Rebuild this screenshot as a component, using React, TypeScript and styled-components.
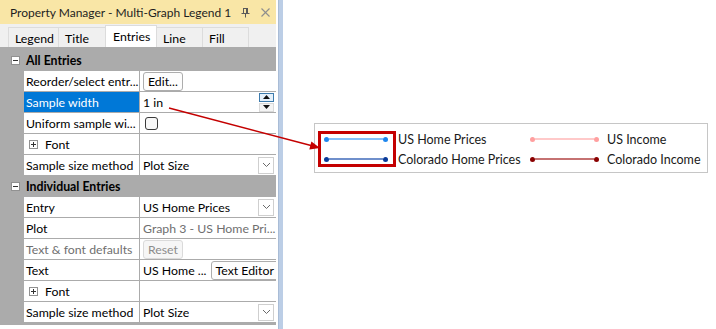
import React from "react";
import styled, { createGlobalStyle } from "styled-components";

const GlobalStyle = createGlobalStyle`
  html, body { margin: 0; padding: 0; background: #ffffff; }
  body { font-family: "Lato", "Noto Sans", "DejaVu Sans", sans-serif; font-size: 12.3px; color: #000; }
  * { box-sizing: border-box; }
`;

const Page = styled.div`
  position: relative;
  width: 716px;
  height: 329px;
  display: flex;
  align-items: flex-start;
  overflow: hidden;
`;

const Panel = styled.div`
  width: 276px;
  display: flex;
  flex-direction: column;
`;

const TitleBar = styled.div`
  height: 24px;
  background: #f9e6a6;
  display: flex;
  align-items: center;
  padding: 0 6px 0 10px;
  white-space: nowrap;
  font-size: 12px;
`;

const TitleText = styled.span`
  flex: 1;
  min-width: 0;
  color: #1e1e1e;
`;

const TitleIcon = styled.svg<{ $ml?: number }>`
  display: block;
  flex: none;
  margin-left: ${(p) => p.$ml ?? 0}px;
`;

const TabStrip = styled.div`
  height: 23px;
  background: #f0f0f0;
  display: flex;
  align-items: flex-end;
  padding-left: 8px;
`;

const Tab = styled.div<{ $w: number; $active?: boolean }>`
  width: ${(p) => p.$w}px;
  height: ${(p) => (p.$active ? 22 : 20)}px;
  margin-right: -1px;
  border: 1px solid #dcdcdc;
  border-bottom: none;
  background: ${(p) => (p.$active ? "#ffffff" : "#f0f0f0")};
  padding-left: ${(p) => (p.$active ? 7 : 6)}px;
  padding-top: ${(p) => (p.$active ? 0 : 2)}px;
  display: flex;
  align-items: center;
  position: ${(p) => (p.$active ? "relative" : "static")};
  z-index: ${(p) => (p.$active ? 1 : 0)};
`;

const Grid = styled.div`
  background: #ababab;
  padding: 3px 0 3px;
  display: flex;
  flex-direction: column;
  gap: 1px;
`;

const SectionHeader = styled.div`
  height: 20px;
  display: flex;
  align-items: center;
  padding-left: 11px;
  gap: 6px;
  font-weight: bold;
`;

const Row = styled.div`
  display: grid;
  grid-template-columns: 115px 1fr;
  column-gap: 1px;
  margin-left: 24px;
  height: 20px;
`;

const Cell = styled.div<{ $selected?: boolean; $muted?: boolean; $value?: boolean }>`
  background: ${(p) => (p.$selected ? "#0078d7" : "#ffffff")};
  color: ${(p) => (p.$selected ? "#ffffff" : p.$muted ? "#6f6f6f" : "#000000")};
  display: flex;
  align-items: center;
  padding-left: ${(p) => (p.$value ? 3 : 2)}px;
  padding-right: 2px;
  white-space: nowrap;
  overflow: hidden;
  gap: 4px;
`;

const Button = styled.div<{ $disabled?: boolean }>`
  height: 19px;
  margin-top: 1px;
  padding: 0 4px;
  border: 1px solid ${(p) => (p.$disabled ? "#dadada" : "#adadad")};
  border-radius: 3px;
  background: ${(p) => (p.$disabled ? "#f6f6f6" : "#fdfdfd")};
  color: ${(p) => (p.$disabled ? "#8c8c8c" : "#000")};
  display: flex;
  align-items: center;
`;

const PushRight = styled.div`
  margin-left: auto;
  display: flex;
`;

const Checkbox = styled.div`
  width: 13px;
  height: 13px;
  margin-left: 2px;
  border: 1px solid #3a3a3a;
  border-radius: 3px;
  background: #f8f8f8;
`;

const Spinner = styled.div`
  display: flex;
  flex-direction: column;
  gap: 1px;
  width: 15px;
`;

const SpinButton = styled.div<{ $focus?: boolean }>`
  height: 9px;
  border: 1px solid ${(p) => (p.$focus ? "#3d7bad" : "#d9d9d9")};
  background: ${(p) => (p.$focus ? "#e5f1fb" : "#f4f4f4")};
  display: flex;
  align-items: center;
  justify-content: center;
`;

const DropButton = styled.div`
  width: 16px;
  height: 17px;
  border: 1px solid #cfcfcf;
  background: #ffffff;
  display: flex;
  align-items: center;
  justify-content: center;
`;

const ExpandBox = styled.div`
  width: 9px;
  height: 9px;
  border: 1px solid #919191;
  background: #ffffff;
  position: relative;
  flex: none;
`;

const Divider = styled.div`
  width: 5px;
  height: 329px;
  margin-left: 2px;
  background: #bccee6;
  border-left: 1px solid #a9bcd6;
`;

const Canvas = styled.div`
  flex: 1;
  padding: 123px 0 0 31px;
`;

const Legend = styled.div`
  width: 394px;
  height: 50px;
  border: 1px solid #c6c6c6;
  padding: 7px 0 5px 3px;
  display: flex;
  align-items: center;
  color: #1a1a1a;
  font-size: 12.5px;
`;

const RedBox = styled.div`
  width: 79px;
  height: 36px;
  border: 3px solid #c40000;
  display: flex;
  flex-direction: column;
  gap: 10px;
  padding: 0 5px 0 3px;
`;

const Sample = styled.div<{ $h: number }>`
  height: ${(p) => p.$h}px;
  display: flex;
  align-items: center;
`;

const Dot = styled.span<{ $c: string }>`
  width: 5px;
  height: 5px;
  border-radius: 50%;
  background: ${(p) => p.$c};
  flex: none;
`;

const Line = styled.span<{ $c: string }>`
  flex: 1;
  height: 2px;
  background: ${(p) => p.$c};
`;

const Column = styled.div<{ $w: number; $ml?: number }>`
  width: ${(p) => p.$w}px;
  margin-left: ${(p) => p.$ml ?? 0}px;
  display: flex;
  flex-direction: column;
  flex: none;
`;

const LegendLabel = styled.div`
  height: 20px;
  display: flex;
  align-items: center;
  white-space: nowrap;
`;

const Overlay = styled.svg`
  position: absolute;
  left: 0;
  top: 0;
  pointer-events: none;
`;

const Minus = () => (
  <ExpandBox>
    <svg width="7" height="7" style={{ position: "absolute", left: 0, top: 0 }}>
      <line x1="1" y1="3.5" x2="6" y2="3.5" stroke="#333" strokeWidth="1" />
    </svg>
  </ExpandBox>
);

const Plus = () => (
  <ExpandBox>
    <svg width="7" height="7" style={{ position: "absolute", left: 0, top: 0 }}>
      <line x1="1" y1="3.5" x2="6" y2="3.5" stroke="#333" strokeWidth="1" />
      <line x1="3.5" y1="1" x2="3.5" y2="6" stroke="#333" strokeWidth="1" />
    </svg>
  </ExpandBox>
);

const Chevron = () => (
  <svg width="9" height="6" viewBox="0 0 9 6">
    <polyline points="1,1 4.5,4.5 8,1" fill="none" stroke="#6a6a6a" strokeWidth="1" />
  </svg>
);

const SampleLine = ({ h, dot, line }: { h: number; dot: string; line: string }) => (
  <Sample $h={h}>
    <Dot $c={dot} />
    <Line $c={line} />
    <Dot $c={dot} />
  </Sample>
);

export default function App() {
  return (
    <>
      <GlobalStyle />
      <Page>
        <Panel>
          <TitleBar>
            <TitleText>Property Manager - Multi-Graph Legend 1</TitleText>
            <TitleIcon width="9" height="11" viewBox="0 0 9 11">
              <rect x="2.5" y="1.5" width="4" height="5" fill="none" stroke="#5a5a5a" strokeWidth="1" />
              <line x1="5.5" y1="2" x2="5.5" y2="6" stroke="#5a5a5a" strokeWidth="1" />
              <line x1="0.5" y1="6.5" x2="8.5" y2="6.5" stroke="#5a5a5a" strokeWidth="1" />
              <line x1="4.5" y1="7" x2="4.5" y2="10.5" stroke="#5a5a5a" strokeWidth="1" />
            </TitleIcon>
            <TitleIcon $ml={11} width="9" height="9" viewBox="0 0 9 9">
              <line x1="0.5" y1="0.5" x2="8.5" y2="8.5" stroke="#8e8e8e" strokeWidth="1.1" />
              <line x1="8.5" y1="0.5" x2="0.5" y2="8.5" stroke="#8e8e8e" strokeWidth="1.1" />
            </TitleIcon>
          </TitleBar>
          <TabStrip>
            <Tab $w={51}>Legend</Tab>
            <Tab $w={48}>Title</Tab>
            <Tab $w={52} $active>Entries</Tab>
            <Tab $w={47}>Line</Tab>
            <Tab $w={47}>Fill</Tab>
          </TabStrip>
          <Grid>
            <SectionHeader>
              <Minus />
              All Entries
            </SectionHeader>
            <Row>
              <Cell>Reorder/select entr...</Cell>
              <Cell $value>
                <Button>Edit...</Button>
              </Cell>
            </Row>
            <Row>
              <Cell $selected>Sample width</Cell>
              <Cell $value>
                1 in
                <PushRight>
                  <Spinner>
                    <SpinButton $focus>
                      <svg width="7" height="4" viewBox="0 0 7 4">
                        <polygon points="0,4 7,4 3.5,0" fill="#111" />
                      </svg>
                    </SpinButton>
                    <SpinButton>
                      <svg width="7" height="4" viewBox="0 0 7 4">
                        <polygon points="0,0 7,0 3.5,4" fill="#111" />
                      </svg>
                    </SpinButton>
                  </Spinner>
                </PushRight>
              </Cell>
            </Row>
            <Row>
              <Cell>Uniform sample wi...</Cell>
              <Cell $value>
                <Checkbox />
              </Cell>
            </Row>
            <Row>
              <Cell style={{ paddingLeft: 5 }}>
                <Plus />
                <span style={{ marginLeft: 3 }}>Font</span>
              </Cell>
              <Cell $value />
            </Row>
            <Row>
              <Cell>Sample size method</Cell>
              <Cell $value>
                Plot Size
                <PushRight>
                  <DropButton>
                    <Chevron />
                  </DropButton>
                </PushRight>
              </Cell>
            </Row>
            <SectionHeader>
              <Minus />
              Individual Entries
            </SectionHeader>
            <Row>
              <Cell>Entry</Cell>
              <Cell $value>
                US Home Prices
                <PushRight>
                  <DropButton>
                    <Chevron />
                  </DropButton>
                </PushRight>
              </Cell>
            </Row>
            <Row>
              <Cell>Plot</Cell>
              <Cell $value $muted>
                Graph 3 - US Home Pri...
              </Cell>
            </Row>
            <Row>
              <Cell $muted>Text &amp; font defaults</Cell>
              <Cell $value>
                <Button $disabled>Reset</Button>
              </Cell>
            </Row>
            <Row>
              <Cell>Text</Cell>
              <Cell $value>
                US Home ...
                <PushRight>
                  <Button>Text Editor</Button>
                </PushRight>
              </Cell>
            </Row>
            <Row>
              <Cell style={{ paddingLeft: 5 }}>
                <Plus />
                <span style={{ marginLeft: 3 }}>Font</span>
              </Cell>
              <Cell $value />
            </Row>
            <Row>
              <Cell>Sample size method</Cell>
              <Cell $value>
                Plot Size
                <PushRight>
                  <DropButton>
                    <Chevron />
                  </DropButton>
                </PushRight>
              </Cell>
            </Row>
          </Grid>
        </Panel>
        <Divider />
        <Canvas>
          <Legend>
            <RedBox>
              <SampleLine h={10} dot="#1e86ee" line="#86c1fb" />
              <SampleLine h={10} dot="#0a3a98" line="#6f8fcb" />
            </RedBox>
            <Column $w={132} $ml={2}>
              <LegendLabel>US Home Prices</LegendLabel>
              <LegendLabel>Colorado Home Prices</LegendLabel>
            </Column>
            <Column $w={69}>
              <SampleLine h={20} dot="#ff9f9f" line="#ffc9c9" />
              <SampleLine h={20} dot="#8a0000" line="#c57272" />
            </Column>
            <Column $w={100} $ml={8}>
              <LegendLabel>US Income</LegendLabel>
              <LegendLabel>Colorado Income</LegendLabel>
            </Column>
          </Legend>
        </Canvas>
        <Overlay width="716" height="329" viewBox="0 0 716 329">
          <line x1="169" y1="108" x2="311" y2="145.6" stroke="#c40000" strokeWidth="1.5" />
          <polygon points="320,148 309.3,149.5 311.4,141.5" fill="#c40000" />
        </Overlay>
      </Page>
    </>
  );
}
